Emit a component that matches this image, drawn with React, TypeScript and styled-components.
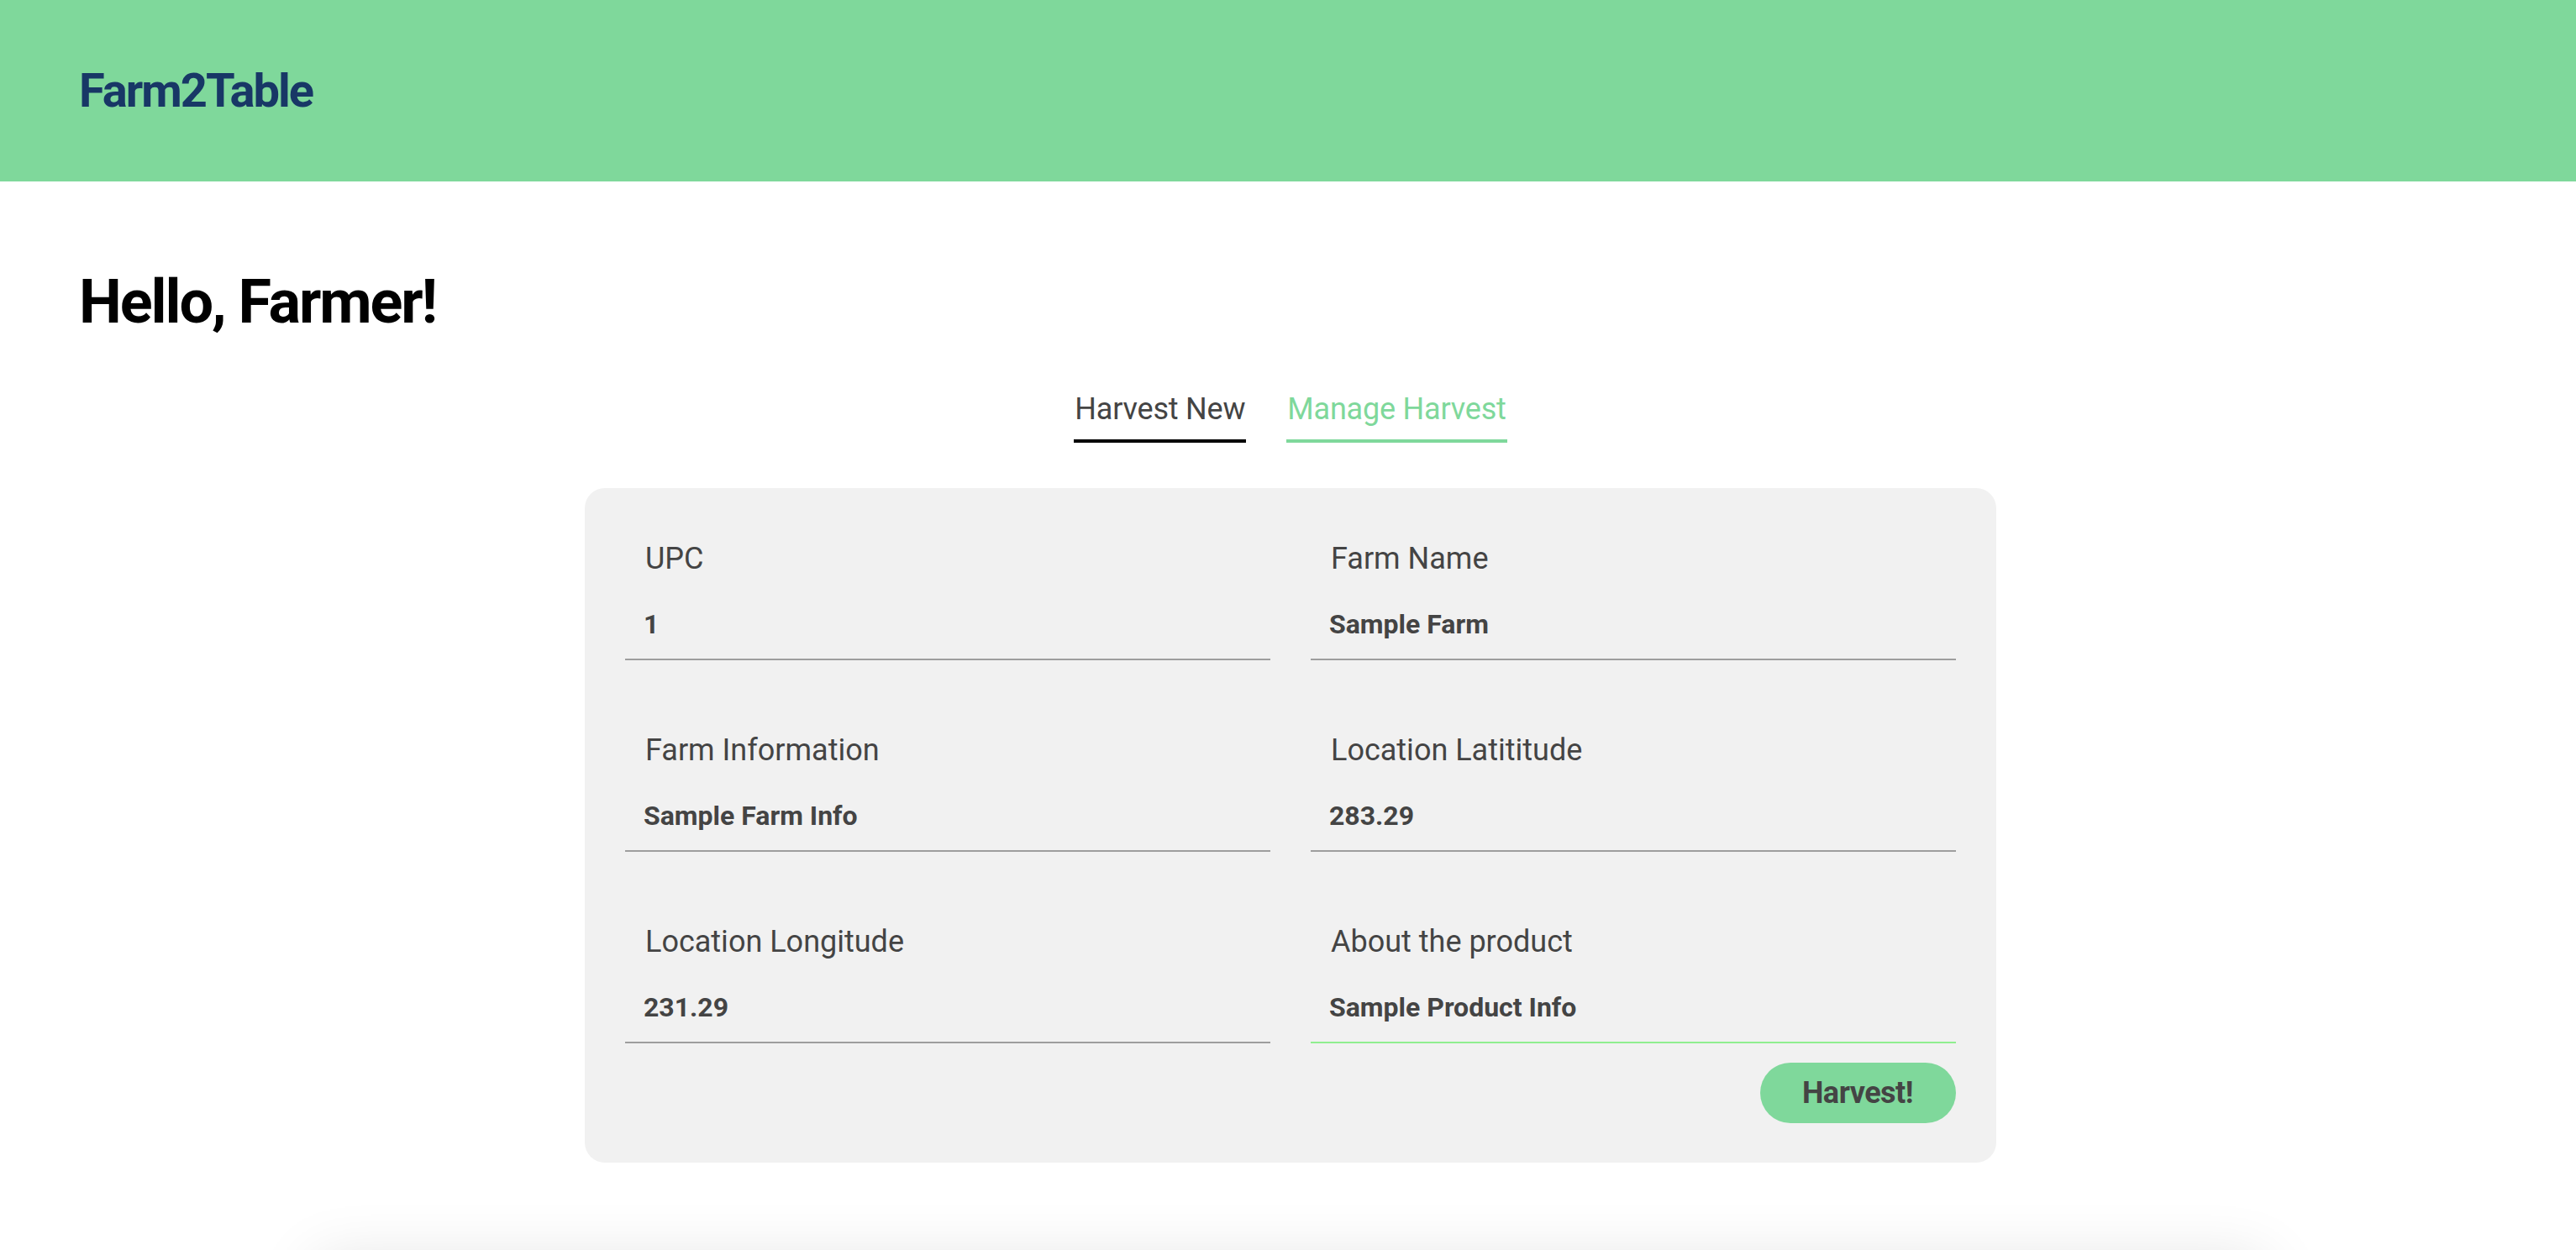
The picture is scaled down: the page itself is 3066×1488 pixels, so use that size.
import styled, { createGlobalStyle } from 'styled-components';
import { useState } from 'react';

const GlobalStyle = createGlobalStyle`
  body {
    margin: 0;
    font-family: Roboto, "Liberation Sans", sans-serif;
    background: #ffffff;
  }
  * {
    box-sizing: border-box;
  }
`;

const palette = {
  green: '#7fd89b',
  navy: '#183766',
  text: '#444444',
  card: '#f1f1f1',
  line: '#9e9e9e',
  focus: '#90ee90',
};

const Page = styled.div`
  height: 100vh;
  overflow: hidden;
`;

const Header = styled.header`
  height: 216px;
  display: flex;
  align-items: center;
  padding-left: 94px;
  background-color: ${palette.green};
`;

const Logo = styled.h2`
  margin: 0;
  font-size: 56px;
  font-weight: 700;
  color: ${palette.navy};
  letter-spacing: -2px;
`;

const Main = styled.main`
  padding: 101px 88px 0 94px;
`;

const Greeting = styled.h1`
  margin: 0;
  font-size: 72px;
  font-weight: 700;
  color: #000;
  letter-spacing: -2.1px;
`;

const Tabs = styled.nav`
  display: flex;
  justify-content: center;
  gap: 48px;
  margin-top: 64px;
`;

const Tab = styled.button<{ $active: boolean }>`
  font-family: inherit;
  font-size: 36px;
  line-height: 42px;
  letter-spacing: -0.2px;
  background: none;
  border: none;
  padding: 0 1px 15px;
  cursor: pointer;
  color: ${(p) => (p.$active ? palette.text : palette.green)};
  border-bottom: 4px solid ${(p) => (p.$active ? '#000' : palette.green)};
`;

const Card = styled.form`
  width: 1680px;
  margin: 54px auto 0;
  padding: 63px 48px 47px;
  background-color: ${palette.card};
  border-radius: 24px;
`;

const FieldGrid = styled.div`
  display: grid;
  grid-template-columns: 1fr 1fr;
  column-gap: 48px;
  row-gap: 86px;
`;

const Field = styled.div`
  display: flex;
  flex-direction: column;
  gap: 22px;
`;

const Label = styled.label`
  padding-left: 24px;
  font-size: 36px;
  line-height: 42px;
  color: ${palette.text};
`;

const Input = styled.input<{ $focused?: boolean }>`
  width: 100%;
  height: 78px;
  padding: 16px 20px 22px 22px;
  font-family: inherit;
  font-size: 32px;
  line-height: 38px;
  font-weight: 700;
  color: ${palette.text};
  background: transparent;
  border: none;
  border-bottom: 2px solid ${(p) => (p.$focused ? palette.focus : palette.line)};
  outline: none;
`;

const Actions = styled.div`
  display: flex;
  justify-content: flex-end;
  margin-top: 23px;
`;

const HarvestButton = styled.button`
  height: 72px;
  padding: 0 51px 0 50px;
  border: none;
  border-radius: 36px;
  background-color: ${palette.green};
  color: ${palette.text};
  font-family: inherit;
  font-size: 36px;
  font-weight: 700;
  letter-spacing: -0.5px;
  cursor: pointer;
`;

const NextSection = styled.section`
  width: 2320px;
  height: 400px;
  margin: 117px auto 0;
  background: #ffffff;
  box-shadow: 0 0 70px rgba(0, 0, 0, 0.12);
`;

const fields = [
  { id: 'upc', label: 'UPC', value: '1' },
  { id: 'farmName', label: 'Farm Name', value: 'Sample Farm' },
  { id: 'farmInfo', label: 'Farm Information', value: 'Sample Farm Info' },
  { id: 'lat', label: 'Location Latititude', value: '283.29' },
  { id: 'long', label: 'Location Longitude', value: '231.29' },
  { id: 'product', label: 'About the product', value: 'Sample Product Info' },
];

export default function App() {
  const [tab, setTab] = useState<'new' | 'manage'>('new');

  function handleSubmit(e: React.FormEvent<HTMLFormElement>) {
    e.preventDefault();
  }

  return (
    <Page>
      <GlobalStyle />
      <Header>
        <Logo>Farm2Table</Logo>
      </Header>
      <Main>
        <Greeting>Hello, Farmer!</Greeting>
        <Tabs>
          <Tab $active={tab === 'new'} onClick={() => setTab('new')}>
            Harvest New
          </Tab>
          <Tab $active={tab === 'manage'} onClick={() => setTab('manage')}>
            Manage Harvest
          </Tab>
        </Tabs>
        <Card onSubmit={handleSubmit}>
          <FieldGrid>
            {fields.map((f, i) => (
              <Field key={f.id}>
                <Label htmlFor={f.id}>{f.label}</Label>
                <Input
                  id={f.id}
                  name={f.id}
                  defaultValue={f.value}
                  $focused={i === fields.length - 1}
                />
              </Field>
            ))}
          </FieldGrid>
          <Actions>
            <HarvestButton type='submit'>Harvest!</HarvestButton>
          </Actions>
        </Card>
        <NextSection />
      </Main>
    </Page>
  );
}
